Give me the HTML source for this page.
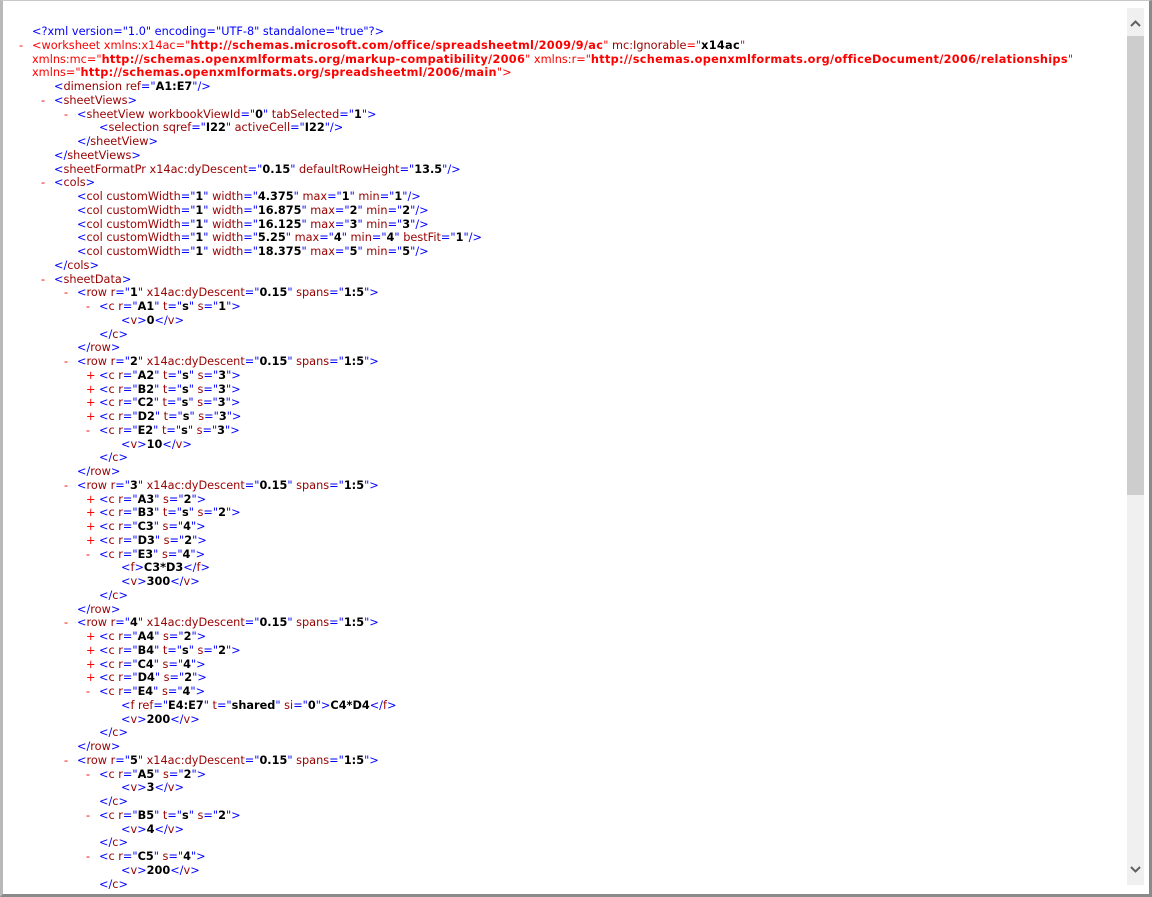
<!DOCTYPE html>
<html><head><meta charset="utf-8"><style>
html,body{margin:0;padding:0;width:1152px;height:897px;overflow:hidden;background:#fff}
body{position:relative;font-family:"DejaVu Sans",Verdana,sans-serif;font-size:11.3px;color:#000}
#frame{position:absolute;left:0;top:0;width:1152px;height:897px;box-sizing:border-box;border-left:3px solid #b9b9b9;border-right:3px solid #8a8a8a;border-bottom:3px solid #8a8a8a;border-top:1px solid #c8c8c8}
#c{position:absolute;left:0;top:25px}
.d{height:13.75px;line-height:13.75px;white-space:pre;position:relative}
.l0{padding-left:32px}.l1{padding-left:54px}.l2{padding-left:77px}.l3{padding-left:99px}.l4{padding-left:121px}
s{text-decoration:none;color:#f00;position:absolute;margin-left:-13px}
k{color:#00f}n{color:#990000}b{font-weight:bold}
.r,.r k,.r n{color:#f00}
.r b{letter-spacing:0.3px}
#sb{position:absolute;left:1127px;top:8px;width:17px;height:877px;background:#f0f0f0}
#th{position:absolute;left:1127px;top:36px;width:17px;height:459px;background:#cdcdcd}
</style></head><body>
<div id="frame"></div>
<div id="c">
<div class="d l0"><k>&lt;?xml version="1.0" encoding="UTF-8" standalone="true"?&gt;</k></div>
<div class="d l0 r"><s>-</s>&lt;worksheet xmlns:x14ac="<b>http://schemas.microsoft.com/office/spreadsheetml/2009/9/ac</b>" <span style="color:#990000">mc:Ignorable</span>="<b style="color:#000">x14ac</b>"</div>
<div class="d l0 r">xmlns:mc="<b>http://schemas.openxmlformats.org/markup-compatibility/2006</b>" xmlns:r="<b>http://schemas.openxmlformats.org/officeDocument/2006/relationships</b>"</div>
<div class="d l0 r">xmlns="<b>http://schemas.openxmlformats.org/spreadsheetml/2006/main</b>"<k>&gt;</k></div>
<div class="d l1"><k>&lt;</k><n>dimension ref</n><k>="</k><b>A1:E7</b><k>"/&gt;</k></div>
<div class="d l1"><s>-</s><k>&lt;</k><n>sheetViews</n><k>&gt;</k></div>
<div class="d l2"><s>-</s><k>&lt;</k><n>sheetView workbookViewId</n><k>="</k><b>0</b><k>"</k> <n>tabSelected</n><k>="</k><b>1</b><k>"&gt;</k></div>
<div class="d l3"><k>&lt;</k><n>selection sqref</n><k>="</k><b>I22</b><k>"</k> <n>activeCell</n><k>="</k><b>I22</b><k>"/&gt;</k></div>
<div class="d l2"><k>&lt;/</k><n>sheetView</n><k>&gt;</k></div>
<div class="d l1"><k>&lt;/</k><n>sheetViews</n><k>&gt;</k></div>
<div class="d l1"><k>&lt;</k><n>sheetFormatPr x14ac:dyDescent</n><k>="</k><b>0.15</b><k>"</k> <n>defaultRowHeight</n><k>="</k><b>13.5</b><k>"/&gt;</k></div>
<div class="d l1"><s>-</s><k>&lt;</k><n>cols</n><k>&gt;</k></div>
<div class="d l2"><k>&lt;</k><n>col customWidth</n><k>="</k><b>1</b><k>"</k> <n>width</n><k>="</k><b>4.375</b><k>"</k> <n>max</n><k>="</k><b>1</b><k>"</k> <n>min</n><k>="</k><b>1</b><k>"/&gt;</k></div>
<div class="d l2"><k>&lt;</k><n>col customWidth</n><k>="</k><b>1</b><k>"</k> <n>width</n><k>="</k><b>16.875</b><k>"</k> <n>max</n><k>="</k><b>2</b><k>"</k> <n>min</n><k>="</k><b>2</b><k>"/&gt;</k></div>
<div class="d l2"><k>&lt;</k><n>col customWidth</n><k>="</k><b>1</b><k>"</k> <n>width</n><k>="</k><b>16.125</b><k>"</k> <n>max</n><k>="</k><b>3</b><k>"</k> <n>min</n><k>="</k><b>3</b><k>"/&gt;</k></div>
<div class="d l2"><k>&lt;</k><n>col customWidth</n><k>="</k><b>1</b><k>"</k> <n>width</n><k>="</k><b>5.25</b><k>"</k> <n>max</n><k>="</k><b>4</b><k>"</k> <n>min</n><k>="</k><b>4</b><k>"</k> <n>bestFit</n><k>="</k><b>1</b><k>"/&gt;</k></div>
<div class="d l2"><k>&lt;</k><n>col customWidth</n><k>="</k><b>1</b><k>"</k> <n>width</n><k>="</k><b>18.375</b><k>"</k> <n>max</n><k>="</k><b>5</b><k>"</k> <n>min</n><k>="</k><b>5</b><k>"/&gt;</k></div>
<div class="d l1"><k>&lt;/</k><n>cols</n><k>&gt;</k></div>
<div class="d l1"><s>-</s><k>&lt;</k><n>sheetData</n><k>&gt;</k></div>
<div class="d l2"><s>-</s><k>&lt;</k><n>row r</n><k>="</k><b>1</b><k>"</k> <n>x14ac:dyDescent</n><k>="</k><b>0.15</b><k>"</k> <n>spans</n><k>="</k><b>1:5</b><k>"&gt;</k></div>
<div class="d l3"><s>-</s><k>&lt;</k><n>c r</n><k>="</k><b>A1</b><k>"</k> <n>t</n><k>="</k><b>s</b><k>"</k> <n>s</n><k>="</k><b>1</b><k>"&gt;</k></div>
<div class="d l4"><k>&lt;</k><n>v</n><k>&gt;</k><b>0</b><k>&lt;/</k><n>v</n><k>&gt;</k></div>
<div class="d l3"><k>&lt;/</k><n>c</n><k>&gt;</k></div>
<div class="d l2"><k>&lt;/</k><n>row</n><k>&gt;</k></div>
<div class="d l2"><s>-</s><k>&lt;</k><n>row r</n><k>="</k><b>2</b><k>"</k> <n>x14ac:dyDescent</n><k>="</k><b>0.15</b><k>"</k> <n>spans</n><k>="</k><b>1:5</b><k>"&gt;</k></div>
<div class="d l3"><s>+</s><k>&lt;</k><n>c r</n><k>="</k><b>A2</b><k>"</k> <n>t</n><k>="</k><b>s</b><k>"</k> <n>s</n><k>="</k><b>3</b><k>"&gt;</k></div>
<div class="d l3"><s>+</s><k>&lt;</k><n>c r</n><k>="</k><b>B2</b><k>"</k> <n>t</n><k>="</k><b>s</b><k>"</k> <n>s</n><k>="</k><b>3</b><k>"&gt;</k></div>
<div class="d l3"><s>+</s><k>&lt;</k><n>c r</n><k>="</k><b>C2</b><k>"</k> <n>t</n><k>="</k><b>s</b><k>"</k> <n>s</n><k>="</k><b>3</b><k>"&gt;</k></div>
<div class="d l3"><s>+</s><k>&lt;</k><n>c r</n><k>="</k><b>D2</b><k>"</k> <n>t</n><k>="</k><b>s</b><k>"</k> <n>s</n><k>="</k><b>3</b><k>"&gt;</k></div>
<div class="d l3"><s>-</s><k>&lt;</k><n>c r</n><k>="</k><b>E2</b><k>"</k> <n>t</n><k>="</k><b>s</b><k>"</k> <n>s</n><k>="</k><b>3</b><k>"&gt;</k></div>
<div class="d l4"><k>&lt;</k><n>v</n><k>&gt;</k><b>10</b><k>&lt;/</k><n>v</n><k>&gt;</k></div>
<div class="d l3"><k>&lt;/</k><n>c</n><k>&gt;</k></div>
<div class="d l2"><k>&lt;/</k><n>row</n><k>&gt;</k></div>
<div class="d l2"><s>-</s><k>&lt;</k><n>row r</n><k>="</k><b>3</b><k>"</k> <n>x14ac:dyDescent</n><k>="</k><b>0.15</b><k>"</k> <n>spans</n><k>="</k><b>1:5</b><k>"&gt;</k></div>
<div class="d l3"><s>+</s><k>&lt;</k><n>c r</n><k>="</k><b>A3</b><k>"</k> <n>s</n><k>="</k><b>2</b><k>"&gt;</k></div>
<div class="d l3"><s>+</s><k>&lt;</k><n>c r</n><k>="</k><b>B3</b><k>"</k> <n>t</n><k>="</k><b>s</b><k>"</k> <n>s</n><k>="</k><b>2</b><k>"&gt;</k></div>
<div class="d l3"><s>+</s><k>&lt;</k><n>c r</n><k>="</k><b>C3</b><k>"</k> <n>s</n><k>="</k><b>4</b><k>"&gt;</k></div>
<div class="d l3"><s>+</s><k>&lt;</k><n>c r</n><k>="</k><b>D3</b><k>"</k> <n>s</n><k>="</k><b>2</b><k>"&gt;</k></div>
<div class="d l3"><s>-</s><k>&lt;</k><n>c r</n><k>="</k><b>E3</b><k>"</k> <n>s</n><k>="</k><b>4</b><k>"&gt;</k></div>
<div class="d l4"><k>&lt;</k><n>f</n><k>&gt;</k><b>C3*D3</b><k>&lt;/</k><n>f</n><k>&gt;</k></div>
<div class="d l4"><k>&lt;</k><n>v</n><k>&gt;</k><b>300</b><k>&lt;/</k><n>v</n><k>&gt;</k></div>
<div class="d l3"><k>&lt;/</k><n>c</n><k>&gt;</k></div>
<div class="d l2"><k>&lt;/</k><n>row</n><k>&gt;</k></div>
<div class="d l2"><s>-</s><k>&lt;</k><n>row r</n><k>="</k><b>4</b><k>"</k> <n>x14ac:dyDescent</n><k>="</k><b>0.15</b><k>"</k> <n>spans</n><k>="</k><b>1:5</b><k>"&gt;</k></div>
<div class="d l3"><s>+</s><k>&lt;</k><n>c r</n><k>="</k><b>A4</b><k>"</k> <n>s</n><k>="</k><b>2</b><k>"&gt;</k></div>
<div class="d l3"><s>+</s><k>&lt;</k><n>c r</n><k>="</k><b>B4</b><k>"</k> <n>t</n><k>="</k><b>s</b><k>"</k> <n>s</n><k>="</k><b>2</b><k>"&gt;</k></div>
<div class="d l3"><s>+</s><k>&lt;</k><n>c r</n><k>="</k><b>C4</b><k>"</k> <n>s</n><k>="</k><b>4</b><k>"&gt;</k></div>
<div class="d l3"><s>+</s><k>&lt;</k><n>c r</n><k>="</k><b>D4</b><k>"</k> <n>s</n><k>="</k><b>2</b><k>"&gt;</k></div>
<div class="d l3"><s>-</s><k>&lt;</k><n>c r</n><k>="</k><b>E4</b><k>"</k> <n>s</n><k>="</k><b>4</b><k>"&gt;</k></div>
<div class="d l4"><k>&lt;</k><n>f ref</n><k>="</k><b>E4:E7</b><k>"</k> <n>t</n><k>="</k><b>shared</b><k>"</k> <n>si</n><k>="</k><b>0</b><k>"&gt;</k><b>C4*D4</b><k>&lt;/</k><n>f</n><k>&gt;</k></div>
<div class="d l4"><k>&lt;</k><n>v</n><k>&gt;</k><b>200</b><k>&lt;/</k><n>v</n><k>&gt;</k></div>
<div class="d l3"><k>&lt;/</k><n>c</n><k>&gt;</k></div>
<div class="d l2"><k>&lt;/</k><n>row</n><k>&gt;</k></div>
<div class="d l2"><s>-</s><k>&lt;</k><n>row r</n><k>="</k><b>5</b><k>"</k> <n>x14ac:dyDescent</n><k>="</k><b>0.15</b><k>"</k> <n>spans</n><k>="</k><b>1:5</b><k>"&gt;</k></div>
<div class="d l3"><s>-</s><k>&lt;</k><n>c r</n><k>="</k><b>A5</b><k>"</k> <n>s</n><k>="</k><b>2</b><k>"&gt;</k></div>
<div class="d l4"><k>&lt;</k><n>v</n><k>&gt;</k><b>3</b><k>&lt;/</k><n>v</n><k>&gt;</k></div>
<div class="d l3"><k>&lt;/</k><n>c</n><k>&gt;</k></div>
<div class="d l3"><s>-</s><k>&lt;</k><n>c r</n><k>="</k><b>B5</b><k>"</k> <n>t</n><k>="</k><b>s</b><k>"</k> <n>s</n><k>="</k><b>2</b><k>"&gt;</k></div>
<div class="d l4"><k>&lt;</k><n>v</n><k>&gt;</k><b>4</b><k>&lt;/</k><n>v</n><k>&gt;</k></div>
<div class="d l3"><k>&lt;/</k><n>c</n><k>&gt;</k></div>
<div class="d l3"><s>-</s><k>&lt;</k><n>c r</n><k>="</k><b>C5</b><k>"</k> <n>s</n><k>="</k><b>4</b><k>"&gt;</k></div>
<div class="d l4"><k>&lt;</k><n>v</n><k>&gt;</k><b>200</b><k>&lt;/</k><n>v</n><k>&gt;</k></div>
<div class="d l3"><k>&lt;/</k><n>c</n><k>&gt;</k></div>
</div>
<div id="sb"></div>
<div id="th"></div>
<svg style="position:absolute;left:1127px;top:16px" width="17" height="14"><path d="M4 10 L8.5 5.5 L13 10" fill="none" stroke="#606060" stroke-width="2"/></svg>
<svg style="position:absolute;left:1127px;top:863px" width="17" height="14"><path d="M4 4 L8.5 8.5 L13 4" fill="none" stroke="#606060" stroke-width="2"/></svg>
</body></html>
